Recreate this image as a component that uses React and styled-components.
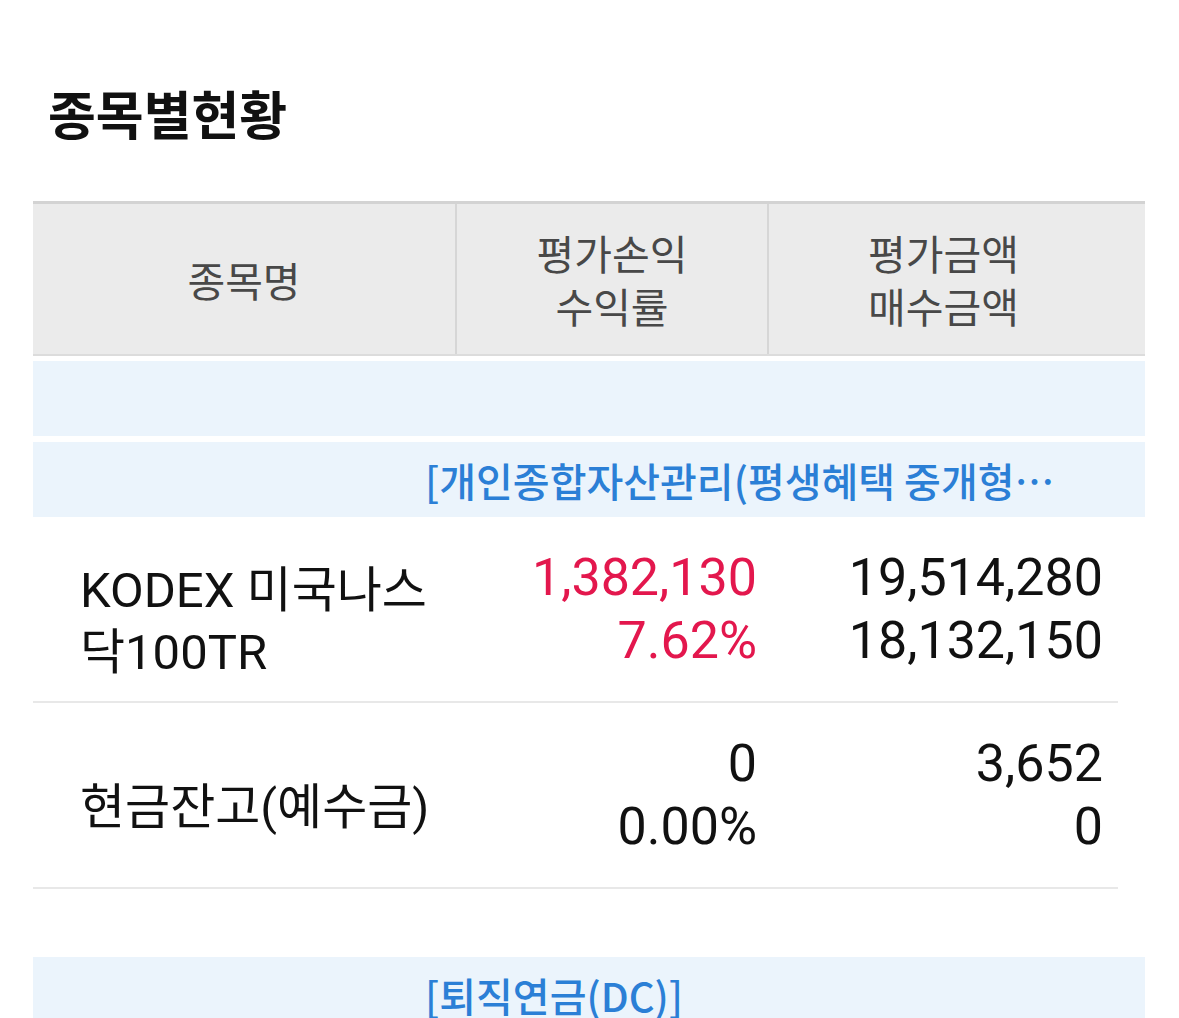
import styled, { createGlobalStyle } from "styled-components";

const GlobalStyle = createGlobalStyle`
  body {
    margin: 0;
    background: #ffffff;
    font-family: Roboto, "Noto Sans CJK KR", sans-serif;
  }
`;

const Page = styled.div`
  padding: 87px 34px 0 33px;
`;

const Title = styled.h1`
  margin: 0 0 62px 15px;
  font-family: "Noto Sans CJK KR", sans-serif;
  font-size: 52px;
  line-height: 52px;
  font-weight: 700;
  color: #111111;
`;

const HeaderRow = styled.div`
  display: grid;
  grid-template-columns: 424px 312px 349px 1fr;
  height: 150px;
  background-color: #ebebeb;
  border-top: 3px solid #d3d3d3;
  border-bottom: 2px solid #dcdcdc;
`;

const HeaderCell = styled.div`
  display: flex;
  align-items: center;
  justify-content: center;
  text-align: center;
  font-family: "Noto Sans CJK KR", sans-serif;
  font-size: 41px;
  line-height: 53px;
  color: #484848;
  border-right: ${(p) => (p.divider ? "2px solid #d6d6d6" : "none")};
`;

const Band = styled.div`
  display: grid;
  grid-template-columns: 392px 1fr;
  align-items: center;
  height: 75px;
  margin-top: ${(p) => p.gap || 0}px;
  background-color: #ebf4fc;
`;

const BandText = styled.div`
  font-family: "Noto Sans CJK KR", sans-serif;
  font-size: 40px;
  font-weight: 500;
  color: #2b7fd6;
  white-space: nowrap;
  overflow: hidden;
`;

const DataRow = styled.div`
  display: grid;
  grid-template-columns: 424px 312px 1fr;
  align-items: center;
  width: 1085px;
  min-height: 184px;
  border-bottom: 2px solid #e8e8e8;
`;

const NameCell = styled.div`
  padding: 26px 0 0 47px;
  font-size: 49px;
  line-height: 62px;
  color: #111111;
`;

const NumCell = styled.div`
  text-align: right;
  padding-right: ${(p) => p.pr}px;
  font-size: 52px;
  line-height: 63px;
  color: ${(p) => (p.red ? "#e3174d" : "#111111")};
`;

const rows = [
  {
    name: ["KODEX 미국나스", "닥100TR"],
    pl: "1,382,130",
    rate: "7.62%",
    evalAmt: "19,514,280",
    buyAmt: "18,132,150",
    red: true,
  },
  {
    name: ["현금잔고(예수금)"],
    pl: "0",
    rate: "0.00%",
    evalAmt: "3,652",
    buyAmt: "0",
    red: false,
  },
];

export default function App() {
  return (
    <>
      <GlobalStyle />
      <Page>
        <Title>종목별현황</Title>
        <HeaderRow>
          <HeaderCell divider={1}>종목명</HeaderCell>
          <HeaderCell divider={1}>
            평가손익
            <br />
            수익률
          </HeaderCell>
          <HeaderCell>
            평가금액
            <br />
            매수금액
          </HeaderCell>
          <div />
        </HeaderRow>
        <Band gap={5} />
        <Band gap={6}>
          <div />
          <BandText>[개인종합자산관리(평생혜택 중개형…</BandText>
        </Band>
        {rows.map((r) => (
          <DataRow key={r.name[0]}>
            <NameCell>
              {r.name.map((n, i) => (
                <div key={i}>{n}</div>
              ))}
            </NameCell>
            <NumCell pr={12} red={r.red}>
              <div>{r.pl}</div>
              <div>{r.rate}</div>
            </NumCell>
            <NumCell pr={15}>
              <div>{r.evalAmt}</div>
              <div>{r.buyAmt}</div>
            </NumCell>
          </DataRow>
        ))}
        <Band gap={68}>
          <div />
          <BandText>[퇴직연금(DC)]</BandText>
        </Band>
      </Page>
    </>
  );
}
